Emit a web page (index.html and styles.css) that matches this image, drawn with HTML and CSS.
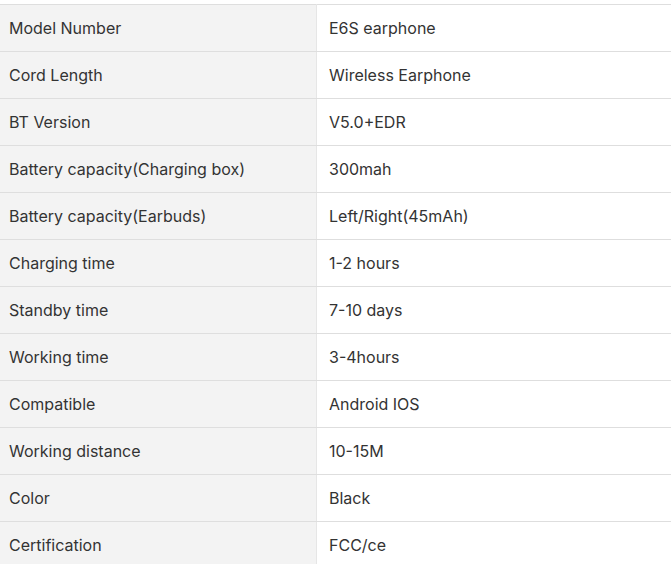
FILE: index.html
```html
<!DOCTYPE html>
<html>
<head>
<meta charset="utf-8">
<link rel="stylesheet" href="styles.css">
</head>
<body>
<table class="specs">
<tbody>
<tr><td class="k">Model Number</td><td class="v">E6S earphone</td></tr>
<tr><td class="k">Cord Length</td><td class="v">Wireless Earphone</td></tr>
<tr><td class="k">BT Version</td><td class="v">V5.0+EDR</td></tr>
<tr><td class="k">Battery capacity(Charging box)</td><td class="v">300mah</td></tr>
<tr><td class="k">Battery capacity(Earbuds)</td><td class="v">Left/Right(45mAh)</td></tr>
<tr><td class="k">Charging time</td><td class="v">1-2 hours</td></tr>
<tr><td class="k">Standby time</td><td class="v">7-10 days</td></tr>
<tr><td class="k">Working time</td><td class="v">3-4hours</td></tr>
<tr><td class="k">Compatible</td><td class="v">Android IOS</td></tr>
<tr><td class="k">Working distance</td><td class="v">10-15M</td></tr>
<tr><td class="k">Color</td><td class="v">Black</td></tr>
<tr><td class="k">Certification</td><td class="v">FCC/ce</td></tr>
</tbody>
</table>
</body>
</html>
```
FILE: styles.css
```css
html, body {
  margin: 0;
  padding: 0;
  background: #fff;
}
body {
  padding-top: 4px;
  font-family: Inter, "Noto Sans", sans-serif;
  font-size: 16px;
  color: #333;
}
.specs {
  width: 671px;
  border-collapse: collapse;
  table-layout: fixed;
}
.specs td {
  height: 46px;
  padding: 0;
  border-top: 1px solid #dedede;
  border-bottom: 1px solid #dedede;
  vertical-align: middle;
  line-height: 20px;
}
.specs .k {
  width: 307px;
  padding-left: 9px;
  background: #f3f3f3;
  border-right: 1px solid #e6e6e6;
}
.specs .v {
  padding-left: 12px;
  background: #fff;
}
```
